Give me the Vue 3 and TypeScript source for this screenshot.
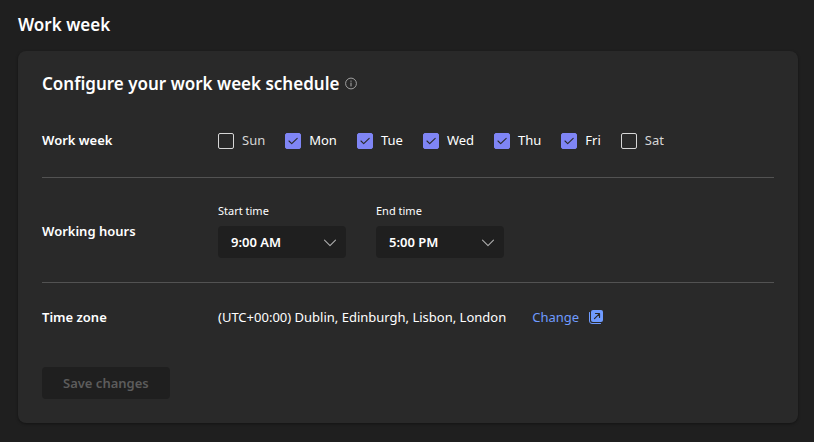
<script setup lang="ts">
import { ref } from 'vue'

interface Day {
  id: string
  label: string
  on: boolean
}

const days = ref<Day[]>([
  { id: 'sun', label: 'Sun', on: false },
  { id: 'mon', label: 'Mon', on: true },
  { id: 'tue', label: 'Tue', on: true },
  { id: 'wed', label: 'Wed', on: true },
  { id: 'thu', label: 'Thu', on: true },
  { id: 'fri', label: 'Fri', on: true },
  { id: 'sat', label: 'Sat', on: false },
])

const start = ref('9:00 AM')
const end = ref('5:00 PM')
const startTimes: string[] = ['8:00 AM', '9:00 AM', '10:00 AM']
const endTimes: string[] = ['4:00 PM', '5:00 PM', '6:00 PM']
</script>

<template>
  <main class="page">
    <h1 class="page-title">Work week</h1>
    <section class="card">
      <h2 class="card-title">
        Configure your work week schedule
        <svg class="info" viewBox="0 0 12 12" aria-hidden="true">
          <circle cx="6" cy="5.500" r="5.400" fill="none" stroke="currentColor" stroke-width="0.9" />
          <path d="M6 5v3" stroke="currentColor" stroke-width="1" stroke-linecap="round" />
          <circle cx="6" cy="3.100" r="0.7" fill="currentColor" />
        </svg>
      </h2>

      <div class="row row-days">
        <h3 class="row-label">Work week</h3>
        <div class="days">
          <label v-for="d in days" :key="d.id" class="day" :class="{ on: d.on }" :for="d.id">
            <span class="box">
              <input :id="d.id" v-model="d.on" class="check" type="checkbox" />
              <svg v-if="d.on" class="tick" viewBox="0 0 16 16" aria-hidden="true">
                <path d="M4 8l2.700 2.700L12.200 5.300" fill="none" stroke="currentColor" stroke-width="1.1" stroke-linecap="round" stroke-linejoin="round" />
              </svg>
            </span>
            {{ d.label }}
          </label>
        </div>
      </div>

      <div class="row row-hours">
        <h3 class="row-label">Working hours</h3>
        <div class="times">
          <div class="field">
            <label class="field-label" for="start">Start time</label>
            <div class="picker">
              <select id="start" v-model="start" class="select">
                <option v-for="t in startTimes" :key="t">{{ t }}</option>
              </select>
              <svg class="chevron" viewBox="0 0 14 8" aria-hidden="true">
                <path d="M1.500 1.200L7 6.700l5.500-5.500" fill="none" stroke="currentColor" stroke-width="1.1" stroke-linecap="round" stroke-linejoin="round" />
              </svg>
            </div>
          </div>
          <div class="field">
            <label class="field-label" for="end">End time</label>
            <div class="picker">
              <select id="end" v-model="end" class="select">
                <option v-for="t in endTimes" :key="t">{{ t }}</option>
              </select>
              <svg class="chevron" viewBox="0 0 14 8" aria-hidden="true">
                <path d="M1.500 1.200L7 6.700l5.500-5.500" fill="none" stroke="currentColor" stroke-width="1.1" stroke-linecap="round" stroke-linejoin="round" />
              </svg>
            </div>
          </div>
        </div>
      </div>

      <div class="row row-zone">
        <h3 class="row-label">Time zone</h3>
        <div class="zone">
          <span>(UTC+00:00) Dublin, Edinburgh, Lisbon, London</span>
          <a class="change" href="#">
            Change
            <svg class="open" viewBox="0 0 14 14" aria-hidden="true">
              <rect x="2" y="0" width="12" height="12" rx="2" fill="currentColor" />
              <path d="M0.500 2.500v8.500a2.500 2.500 0 0 0 2.500 2.500h8.500" fill="none" stroke="currentColor" stroke-width="1" stroke-linecap="round" />
              <path d="M5.500 8.700l5-5M6.500 3.500h4v4" fill="none" stroke="#292929" stroke-width="1.2" stroke-linecap="round" stroke-linejoin="round" />
            </svg>
          </a>
        </div>
      </div>

      <button class="save" type="button" disabled>Save changes</button>
    </section>
  </main>
</template>

<style>
body {
  background: #1f1f1f;
}
</style>

<style scoped>
.page {
  padding: 14px 16px 18px 18px;
  background: #1f1f1f;
  color: #fff;
  font-family: "Noto Sans", sans-serif;
  font-size: 13px;
  line-height: 20px;
}

.page-title,
.card-title,
.row-label {
  margin: 0;
  font-weight: 600;
}

.page-title {
  font-size: 17px;
  line-height: 22px;
}

.card {
  margin-top: 15px;
  padding: 23px 24px 24px;
  border-radius: 8px;
  background: #292929;
  box-shadow: 0 1px 3px rgba(0, 0, 0, 0.4);
}

.card-title {
  display: flex;
  align-items: center;
  gap: 6px;
  font-size: 17px;
}

.info {
  width: 12px;
  height: 12px;
  overflow: visible;
  color: #adadad;
}

.row {
  display: grid;
  grid-template-columns: 176px 1fr;
  align-items: center;
}

.row-days {
  padding: 36px 0 27px;
  border-bottom: 1px solid #525252;
}

.row-hours {
  padding: 25px 0 24px;
  border-bottom: 1px solid #525252;
}

.row-zone {
  padding: 24px 0 40px;
}

.row-label {
  font-size: 13px;
}

.days {
  display: flex;
  gap: 20px;
}

.day {
  display: flex;
  align-items: center;
  gap: 8px;
  color: #d6d6d6;
}

.day.on {
  color: #fff;
}

.box {
  position: relative;
  width: 16px;
  height: 16px;
  margin-top: 2px;
}

.check {
  display: block;
  box-sizing: border-box;
  width: 16px;
  height: 16px;
  margin: 0;
  border: 1px solid #d6d6d6;
  border-radius: 2px;
  background: transparent;
  appearance: none;
}

.check:checked {
  border-color: #7f85f5;
  background: #7f85f5;
}

.tick {
  position: absolute;
  inset: 0;
  color: #292929;
  pointer-events: none;
}

.times {
  display: flex;
  gap: 30px;
}

.field {
  display: grid;
  gap: 7px;
}

.field-label {
  font-size: 11px;
  line-height: 16px;
}

.picker {
  position: relative;
  width: 128px;
}

.select {
  display: block;
  width: 100%;
  height: 32px;
  padding: 0 32px 0 13px;
  border: 0;
  border-radius: 4px;
  background: #1f1f1f;
  color: #fff;
  font: inherit;
  font-weight: 600;
  appearance: none;
}

.chevron {
  position: absolute;
  top: 13px;
  right: 9px;
  width: 14px;
  height: 8px;
  color: #adadad;
  pointer-events: none;
}

.zone {
  display: flex;
  gap: 26px;
}

.change {
  display: flex;
  align-items: center;
  gap: 10px;
  color: #6f9bff;
  text-decoration: none;
}

.open {
  width: 14px;
  height: 14px;
}

.save {
  display: block;
  height: 32px;
  padding: 0 21px;
  border: 0;
  border-radius: 4px;
  background: #1f1f1f;
  color: #5c5c5c;
  font: inherit;
  font-weight: 600;
}
</style>
